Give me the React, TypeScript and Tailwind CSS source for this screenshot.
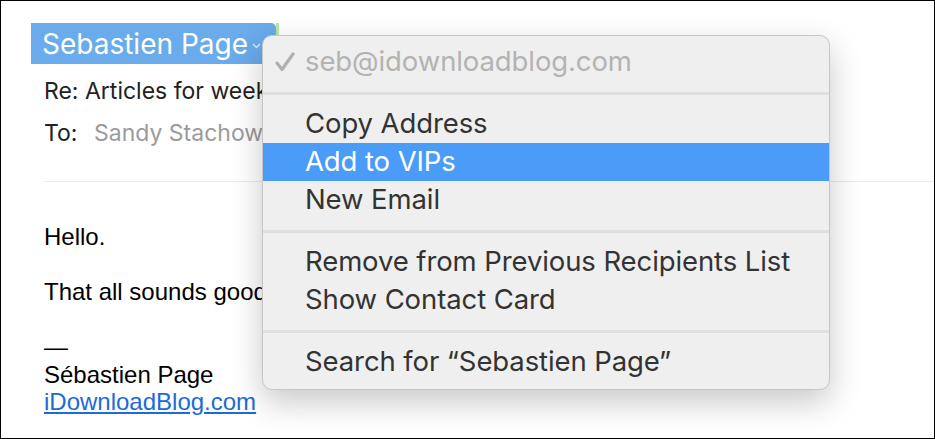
import React from "react";

const sf = { fontFamily: "Inter, 'Noto Sans', sans-serif" };

const MenuRow = ({ label, active, muted, check }: { label: string; active?: boolean; muted?: boolean; check?: boolean }) => (
  <div
    className={`flex h-[38px] items-center pl-[12px] text-[27.5px] tracking-[-0.1px] ${
      active ? "bg-[#4b9cf8] text-white" : muted ? "text-[#b3b3b3]" : "text-[#333333]"
    }`}
  >
    <span className="flex w-[30px] items-center">
      {check && (
        <svg width="20" height="20" viewBox="0 0 20 20" fill="none">
          <path d="M2 11 L7 17.5 L18 2" stroke="#b0b0b0" strokeWidth="3.2" strokeLinecap="round" strokeLinejoin="round" />
        </svg>
      )}
    </span>
    <span>{label}</span>
  </div>
);

const Sep = () => (
  <div className="flex h-[24px] items-center">
    <div className="h-[3px] w-full bg-[#dfdfdf]" />
  </div>
);

export default function App() {
  return (
    <div className="relative h-[439px] w-[935px] overflow-hidden border border-black bg-white">
      {/* message header */}
      <div className="pt-[22px]" style={sf}>
        <div className="flex pl-[30px]">
          <div className="flex h-[41px] w-[245px] items-center rounded-r-[5px] bg-[#6aabeb] pl-[11px] text-[28px] text-white">
            <span>Sebastien Page</span>
            <svg className="ml-[4px] mt-[4px]" width="9" height="6" viewBox="0 0 9 6" fill="none">
              <path d="M1 1 L4.5 4.5 L8 1" stroke="rgba(255,255,255,0.75)" strokeWidth="1.4" />
            </svg>
          </div>
          <div className="h-[41px] w-[3px] bg-[#b7e6a3]" />
        </div>
        <div className="mt-[6px] pl-[43px] text-[23px] text-[#222222]">
          <div className="flex h-[42px] items-center">Re: Articles for week</div>
          <div className="flex h-[42px] items-center">
            <span className="w-[50px]">To:</span>
            <span className="text-[#9b9b9b]">Sandy Stachowiak</span>
          </div>
        </div>
        <div className="ml-[43px] mt-[27px] h-px bg-[#ebebeb]" />
      </div>

      {/* message body */}
      <div className="mt-[41px] pl-[43px] text-[24px] leading-[27.5px] text-black" style={{ fontFamily: "'Liberation Sans', Arial, sans-serif" }}>
        <p>Hello.</p>
        <p className="mt-[27.5px]">That all sounds good to me.</p>
        <p className="mt-[27.5px]">—</p>
        <p>Sébastien Page</p>
        <p className="text-[#1d6ad8] underline">iDownloadBlog.com</p>
      </div>

      {/* context menu */}
      <div
        className="absolute left-[261px] top-[34px] h-[355px] w-[568px] rounded-[10px] border border-[#c6c6c6] bg-[#efefef] pt-[7px] shadow-[0_12px_32px_rgba(0,0,0,0.22)]"
        style={sf}
      >
        <MenuRow label="seb@idownloadblog.com" muted check />
        <Sep />
        <MenuRow label="Copy Address" />
        <MenuRow label="Add to VIPs" active />
        <MenuRow label="New Email" />
        <Sep />
        <MenuRow label="Remove from Previous Recipients List" />
        <MenuRow label="Show Contact Card" />
        <Sep />
        <MenuRow label="Search for “Sebastien Page”" />
      </div>
    </div>
  );
}
